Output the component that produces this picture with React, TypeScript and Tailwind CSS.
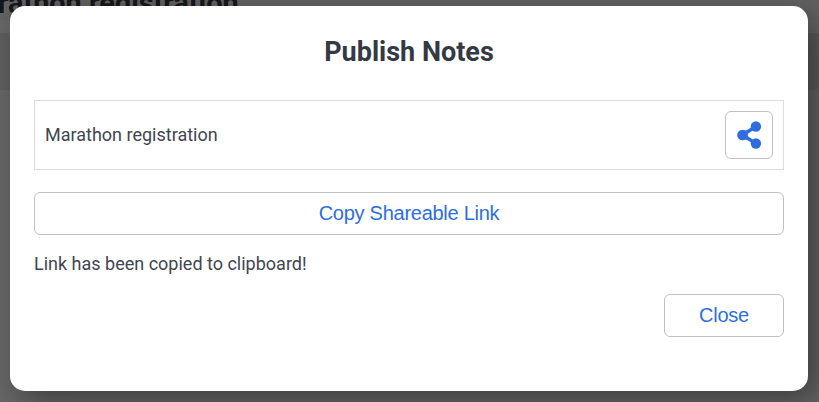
const buttonBase =
  "flex items-center justify-center rounded-[6px] border border-[#c1c1c1] bg-white text-[#2f6de0]";

const labelText = "pb-[2px] font-['Liberation_Sans',sans-serif] text-[20px] tracking-[-0.26px]";

function ShareIcon() {
  return (
    <svg width="26" height="28" viewBox="0 0 26 28" fill="currentColor" aria-hidden="true">
      <path d="M20 5.5 6.4 14 20 22.5" fill="none" stroke="currentColor" strokeWidth="3.5" />
      <path d="M8.5 9.3 12 9.7 12.2 12.6 11.5 14 12.2 15.4 12 18.3 8.5 18.7Z" />
      <circle cx="6.4" cy="14" r="5.2" />
      <circle cx="19.9" cy="5.5" r="5.2" />
      <circle cx="19.9" cy="22.5" r="5.2" />
    </svg>
  );
}

export default function App() {
  return (
    <div className="relative h-[402px] w-[819px] overflow-hidden bg-[#666666] font-[Roboto,sans-serif] text-[#40464f]">
      <div className="h-[33px] bg-[#626262]">
        <h1 className="-ml-[2px] -mt-[13px] whitespace-nowrap text-[28.8px] font-bold leading-[32px] text-[#15171b]">
          rathon registration
        </h1>
      </div>
      <div className="mt-[13px] h-[57px] bg-[#5e5e5e]" />

      <div
        role="dialog"
        className="absolute left-[10px] top-[6px] flex h-[385px] w-[798px] flex-col rounded-[15px] bg-white px-6 shadow-[10px_10px_30px_rgba(0,0,0,0.4)]"
      >
        <h2 className="mt-[30px] text-center text-[27px] font-bold leading-[32px] text-[#343a43]">Publish Notes</h2>
        <div className="mt-[32px] flex h-[70px] items-center justify-between border border-[#dcdcdc] px-[10px]">
          <span className="pb-[2px] text-[18px]">Marathon registration</span>
          <button className={`${buttonBase} size-[48px]`} aria-label="Share">
            <ShareIcon />
          </button>
        </div>
        <button className={`${buttonBase} ${labelText} mt-[22px] h-[43px] w-full`}>
          Copy Shareable Link
        </button>
        <p className="mt-[15px] text-[18px] leading-[28px]">Link has been copied to clipboard!</p>
        <button className={`${buttonBase} ${labelText} mt-[16px] h-[43px] w-[120px] self-end`}>
          Close
        </button>
      </div>
    </div>
  );
}
